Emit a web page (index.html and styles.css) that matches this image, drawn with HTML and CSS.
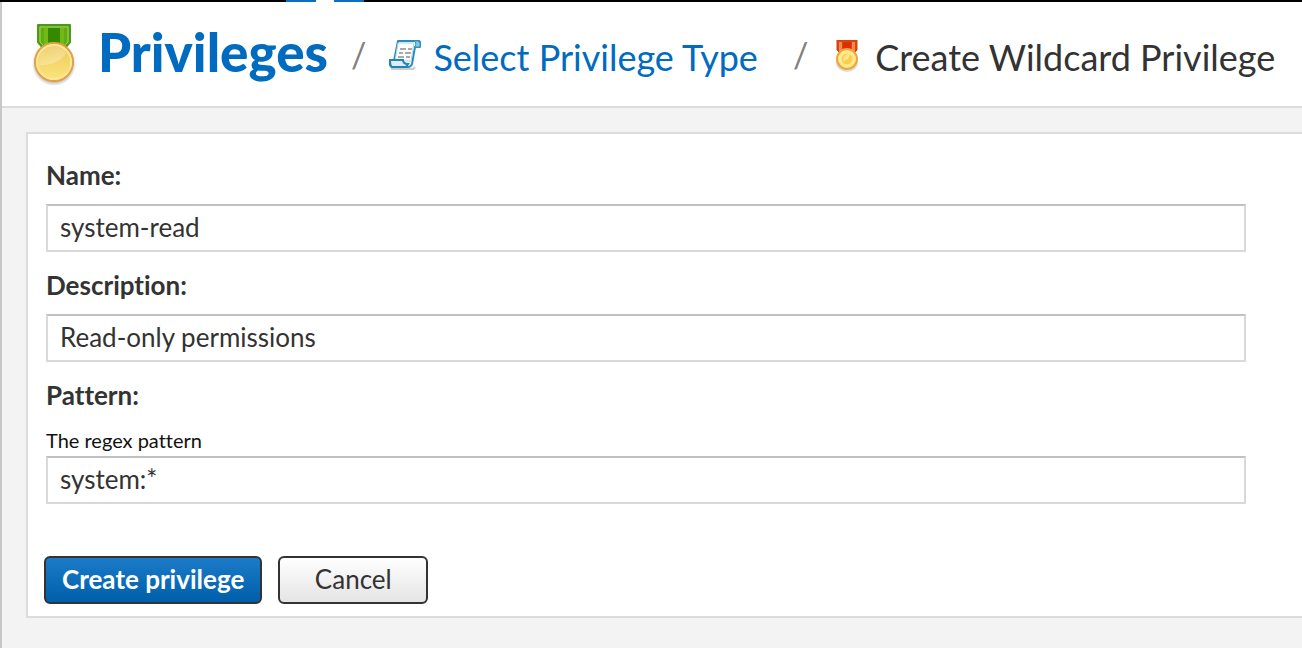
FILE: index.html
```html
<!DOCTYPE html>
<html lang="en">
<head>
<meta charset="utf-8">
<title>Create Wildcard Privilege</title>
<link rel="stylesheet" href="styles.css">
</head>
<body>
<div class="topbar"><span class="tab"><span class="notch"></span></span></div>
<div class="workspace">
  <header class="header">
    <nav class="crumbs" aria-label="Breadcrumb">
      <svg class="medal" viewBox="0 0 44 64" aria-hidden="true">
        <defs>
          <linearGradient id="gold" x1="0" y1="0" x2="0" y2="1"><stop offset="0" stop-color="#ecc758"/><stop offset="1" stop-color="#fbe67c"/></linearGradient>
          <linearGradient id="shine" x1="0" y1="0" x2="1" y2="1"><stop offset="0" stop-color="#fff" stop-opacity=".1"/><stop offset="1" stop-color="#fff" stop-opacity=".35"/></linearGradient>
          <radialGradient id="shadow"><stop offset=".75" stop-color="#555" stop-opacity=".5"/><stop offset="1" stop-color="#555" stop-opacity="0"/></radialGradient>
        </defs>
        <circle cx="22" cy="42" r="22" fill="url(#shadow)"/>
        <path d="M6 3h32v17l-5 6H11l-5-6z" fill="#65ac22" stroke="#4a9a16" stroke-width="2" stroke-linejoin="round"/>
        <path d="M8 5h28v15l-4 4H12l-4-4z" fill="#63ab12" stroke="#a1d45d" stroke-width="1"/>
        <path d="M16 6h12v18H16z" fill="#348900"/>
        <path d="M12 6h4v18h-4zM28 6h4v18h-4z" fill="#72b912"/>
        <circle cx="22" cy="40" r="19" fill="url(#gold)" stroke="#e5a044" stroke-width="2"/>
        <circle cx="22" cy="40" r="17" fill="none" stroke="#ffe69a" stroke-width="2"/>
        <path d="M7 43a15 15 0 0 1 27-12q-8 13-27 12z" fill="url(#shine)"/>
      </svg>
      <a class="root" href="#">Privileges</a>
      <span class="slash">/</span>
      <a class="crumb" href="#">
        <svg class="icon" viewBox="0 0 32 32" aria-hidden="true">
          <path d="M2 29h22l2-2" fill="none" stroke="#ccc" stroke-width="2"/>
          <path d="M9 1h21q2 1 1 6h-5l-3 17q-1 3-4 3H3q-3-1-2-6h4z" fill="#f7fbfd" stroke="#2a8cbb" stroke-width="2" stroke-linejoin="round"/>
          <path d="M9 3h16l-3 18H6z" fill="#fff" stroke="#a9d4e7" stroke-width="1"/>
          <path d="M25 1q3 1 1 6h5q1-5-2-6z" fill="#8ac7e2" stroke="#3993bd" stroke-width="1"/>
          <path d="M1 20h13q0 4 5 4l-2 3H3q-2-1-2-7z" fill="#dceff8" stroke="#2384b4" stroke-width="2"/>
          <path d="M11 9h6m2 0h4M10 13h4m2 0h6M9 17h6m2 0h4" fill="none" stroke="#aaa" stroke-width="2"/>
        </svg>
        <span class="crumb-text">Select Privilege Type</span>
      </a>
      <span class="slash">/</span>
      <span class="crumb current">
        <svg class="icon" viewBox="0 0 32 32" aria-hidden="true">
          <ellipse cx="16" cy="23" rx="11" ry="9" fill="#bbb" opacity=".5"/>
          <path d="M6 0h20v10l-3 3H9l-3-3z" fill="#d9480d" stroke="#c94412" stroke-width="1"/>
          <path d="M8 2h3v9H8zM21 2h3v9h-3z" fill="#f28a54"/>
          <path d="M12 2h8v7h-8z" fill="#df2e05"/>
          <circle cx="16" cy="19" r="10" fill="#ffe173" stroke="#eda445" stroke-width="2"/>
          <circle cx="16" cy="19" r="7" fill="#f8cf55" stroke="#ffeb8a" stroke-width="3"/>
          <path d="M12 21q0-7 7-7-1 6-7 7z" fill="#fde68e"/>
        </svg>
        <span class="crumb-text">Create Wildcard Privilege</span>
      </span>
    </nav>
  </header>
  <main class="content">
    <form class="panel">
      <div class="field">
        <label class="label" for="name">Name:</label>
        <input class="input" id="name" type="text" value="system-read">
      </div>
      <div class="field">
        <label class="label" for="description">Description:</label>
        <input class="input" id="description" type="text" value="Read-only permissions">
      </div>
      <div class="field">
        <label class="label" for="pattern">Pattern:</label>
        <span class="help" id="pattern-help">The regex pattern</span>
        <input class="input" id="pattern" type="text" value="system:*" aria-describedby="pattern-help">
      </div>
      <div class="actions">
        <button class="button primary" type="button">Create privilege</button>
        <button class="button" type="button">Cancel</button>
      </div>
    </form>
  </main>
</div>
</body>
</html>
```
FILE: styles.css
```css
* { box-sizing: border-box; }
body {
  margin: 0;
  min-height: 100vh;
  display: flex;
  flex-direction: column;
  overflow-x: hidden;
  background: #f3f3f3;
  color: #333;
  font-family: Lato, "Open Sans", sans-serif;
  font-size: 26px;
  font-variant-ligatures: none;
}
.topbar { height: 2px; background: #000; }
.tab {
  display: flex;
  justify-content: center;
  width: 78px;
  height: 2px;
  margin-left: 286px;
  background: #0a6fc2;
}
.notch { width: 18px; height: 2px; background: #fff; }
.workspace { flex: 1; border-left: 2px solid #c8c8c8; }
.header {
  padding: 18px 24px 18px 30px;
  background: #fff;
  border-bottom: 2px solid #dcdcdc;
}
.crumbs {
  display: flex;
  align-items: center;
  height: 68px;
  white-space: nowrap;
}
.medal { width: 44px; height: 64px; flex: none; }
.root {
  margin-left: 22px;
  padding-bottom: 4px;
  color: #006bbf;
  font-size: 53px;
  font-weight: 900;
  line-height: 64px;
  text-decoration: none;
}
.slash { margin: 0 23px; color: #808080; font-size: 34px; }
.crumb {
  display: flex;
  align-items: center;
  gap: 12px;
  margin-right: 12px;
  padding-top: 4px;
  color: #006bbf;
  font-size: 36px;
  text-decoration: none;
}
.crumb-text { padding-top: 2px; }
.current { margin-right: 0; color: #333; }
.icon { width: 32px; height: 32px; flex: none; }
.content { padding: 24px 0 30px 24px; }
.panel {
  padding: 26px 56px 12px 18px;
  background: #fff;
  border: 2px solid #dcdcdc;
  border-right: 0;
}
.field { display: flex; flex-direction: column; margin-bottom: 18px; }
.label { margin-bottom: 14px; font-weight: 700; line-height: 30px; }
.help { color: #111; font-size: 20px; line-height: 32px; }
.input {
  width: 100%;
  height: 48px;
  padding: 0 12px 2px;
  border: 2px solid #d9d9d9;
  border-top-color: #c0c0c0;
  background: #fff;
  color: #333;
  font: inherit;
}
.actions { display: flex; gap: 16px; margin: 52px 0 0 -2px; }
.button {
  height: 48px;
  min-width: 150px;
  padding: 0 16px 2px;
  border: 2px solid #333;
  border-radius: 6px;
  background: linear-gradient(#fff, #e4e4e4);
  color: #333;
  font: inherit;
}
.primary {
  min-width: 218px;
  background: linear-gradient(#1b7bc8, #005faa);
  color: #fff;
  font-weight: 700;
}
```
